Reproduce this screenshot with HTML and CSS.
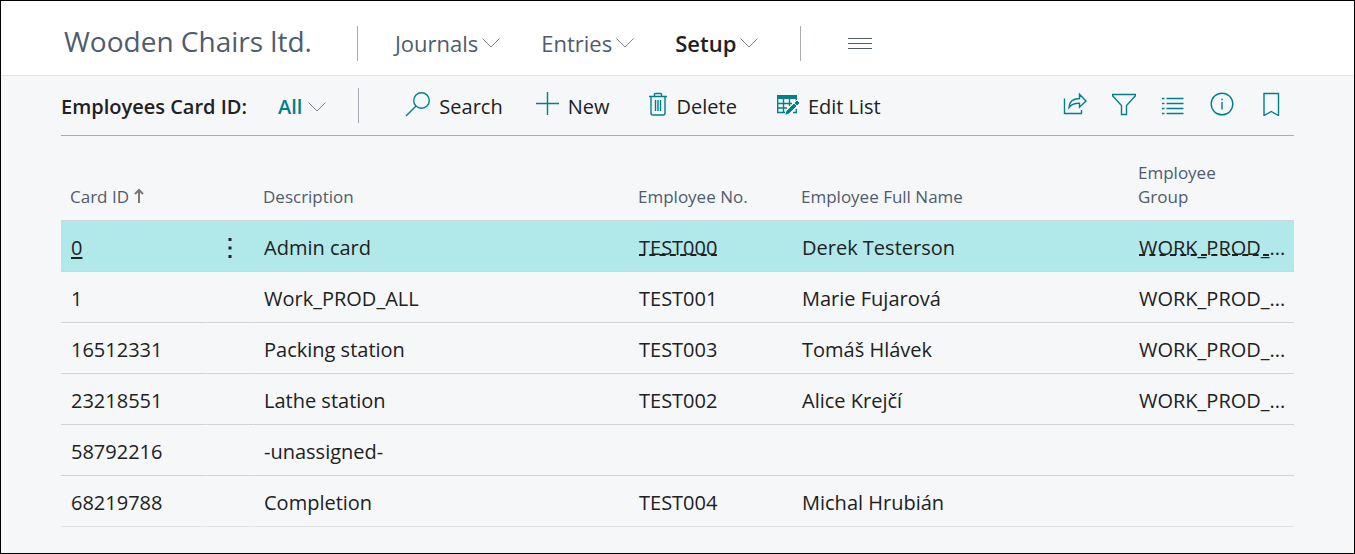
FILE: index.html
```
<!DOCTYPE html>
<html lang="en">

<head>
  <meta charset="UTF-8">
  <meta name="viewport" content="width=device-width, initial-scale=1.0">
  <title>Employees Card ID - Wooden Chairs ltd.</title>
  <link rel="stylesheet" href="styles.css">
</head>

<body>
  <header class="top-bar">
    <h1>Wooden Chairs ltd.</h1>
    <span class="divider"></span>
    <nav class="main-nav">
      <button type="button">Journals
        <svg class="chevron" viewBox="0 0 18 10"><path d="M0.5 0.5 L9 9 L17.5 0.5" /></svg>
      </button>
      <button type="button">Entries
        <svg class="chevron" viewBox="0 0 18 10"><path d="M0.5 0.5 L9 9 L17.5 0.5" /></svg>
      </button>
      <button type="button" class="active">Setup
        <svg class="chevron" viewBox="0 0 18 10"><path d="M0.5 0.5 L9 9 L17.5 0.5" /></svg>
      </button>
    </nav>
    <span class="divider"></span>
    <button type="button" class="menu-btn" aria-label="More">
      <svg width="24" height="13" viewBox="0 0 24 13"><path d="M0 1.5 H24 M0 6.5 H24 M0 11.5 H24" /></svg>
    </button>
  </header>

  <main>
    <div class="toolbar">
      <h2>Employees Card ID:</h2>
      <button type="button" class="view-btn">All
        <svg class="chevron" viewBox="0 0 18 10"><path d="M0.5 0.5 L9 9 L17.5 0.5" /></svg>
      </button>
      <span class="divider"></span>

      <div class="actions">
        <button type="button">
          <svg width="26" height="26" viewBox="0 0 26 26"><circle cx="16.5" cy="9.5" r="7.8" /><path d="M11 15 L1 25" /></svg>
          Search
        </button>
        <button type="button" class="new-btn">
          <svg width="24" height="26" viewBox="0 0 24 26"><path d="M11.5 1 V24 M0 12.5 H23" /></svg>
          New
        </button>
        <button type="button">
          <svg width="20" height="26" viewBox="0 0 20 26"><path d="M1 5.5 H19 M6.5 5.5 V3.5 Q6.5 2.5 7.5 2.5 H12.5 Q13.5 2.5 13.5 3.5 V5.5 M3 5.5 V22 Q3 24 5 24 H15 Q17 24 17 22 V5.5 M7.5 9 V20 M10 9 V20 M12.5 9 V20" /></svg>
          Delete
        </button>
        <button type="button">
          <svg width="24" height="26" viewBox="0 0 24 26">
            <path class="fill" d="M1 4 H21 V8 H1 Z" />
            <path d="M1.7 8 V21.5 H9 M20.3 8 V10 M7.5 8 V21.5 M13.5 8 V15 M1 12.5 H16 M1 17 H11 M17 21.5 H20.3 V18" />
            <path class="pencil" d="M21 9 L24 12 L13 23 L8.5 24.5 L10 20 Z" />
            <path class="cut" d="M17.500 11.500 L21.500 15.500" />
          </svg>
          Edit List
        </button>
      </div>

      <div class="page-tools">
        <button type="button" aria-label="Share">
          <svg width="24" height="24" viewBox="0 0 24 24"><path d="M1.5 6.500 V21.5 H18.5 V18 M6 15.5 C6 10 10 6.8 16.5 6.5 V2.2 L23 9 L16.5 15.2 V11.2 C11.5 11 8.5 12 6 15.500 Z" /></svg>
        </button>
        <button type="button" aria-label="Filter">
          <svg width="24" height="24" viewBox="0 0 24 24"><path d="M0.7 2.5 H23.3 V4 L14.5 13.5 V22.5 H9.5 V13.5 L0.7 4 Z" /></svg>
        </button>
        <button type="button" aria-label="Show as list">
          <svg width="24" height="24" viewBox="0 0 24 24"><path d="M1 6.5 H3.5 M5.5 6.5 H22.5 M1 11.5 H3.5 M5.5 11.5 H22.5 M1 16.5 H3.5 M5.5 16.5 H22.5 M1 21.5 H3.5 M5.5 21.5 H22.5" /></svg>
        </button>
        <button type="button" aria-label="Details">
          <svg width="24" height="24" viewBox="0 0 24 24"><circle cx="12" cy="12" r="10.8" /><path d="M12 10 V17.5 M12 6.5 V8.2" /></svg>
        </button>
        <button type="button" aria-label="Bookmark">
          <svg width="24" height="24" viewBox="0 0 24 24"><path d="M5 1.5 H19.500 V23.5 L12.2 19.5 L5 23.5 Z" /></svg>
        </button>
      </div>
    </div>

    <table>
      <colgroup>
        <col class="col-id">
        <col class="col-more">
        <col class="col-description">
        <col class="col-number">
        <col class="col-name">
        <col class="col-group">
      </colgroup>
      <thead>
        <tr>
          <th>Card ID <svg class="sort" width="10" height="16" viewBox="0 0 10 16"><path d="M5 15 V2 M1 6 L5 2 L9 6" /></svg></th>
          <th></th>
          <th>Description</th>
          <th>Employee No.</th>
          <th>Employee Full Name</th>
          <th>Employee Group</th>
        </tr>
      </thead>
      <tbody>
        <tr class="selected">
          <td><a href="#" class="card-link">0</a></td>
          <td>
            <button type="button" class="row-menu" aria-label="Show more options">
              <svg width="4" height="22" viewBox="0 0 4 22"><path d="M0.5 1 H3.5 V4 H0.5 Z M0.5 9.5 H3.5 V12.5 H0.5 Z M0.5 18 H3.5 V21 H0.5 Z" /></svg>
            </button>
          </td>
          <td>Admin card</td>
          <td><a href="#" class="lookup">TEST000</a></td>
          <td>Derek Testerson</td>
          <td><a href="#" class="lookup">WORK_PROD_</a>...</td>
        </tr>
        <tr>
          <td>1</td>
          <td></td>
          <td>Work_PROD_ALL</td>
          <td>TEST001</td>
          <td>Marie Fujarová</td>
          <td>WORK_PROD_...</td>
        </tr>
        <tr>
          <td>16512331</td>
          <td></td>
          <td>Packing station</td>
          <td>TEST003</td>
          <td>Tomáš Hlávek</td>
          <td>WORK_PROD_...</td>
        </tr>
        <tr>
          <td>23218551</td>
          <td></td>
          <td>Lathe station</td>
          <td>TEST002</td>
          <td>Alice Krejčí</td>
          <td>WORK_PROD_...</td>
        </tr>
        <tr>
          <td>58792216</td>
          <td></td>
          <td>-unassigned-</td>
          <td></td>
          <td></td>
          <td></td>
        </tr>
        <tr>
          <td>68219788</td>
          <td></td>
          <td>Completion</td>
          <td>TEST004</td>
          <td>Michal Hrubián</td>
          <td></td>
        </tr>
      </tbody>
    </table>
  </main>
</body>

</html>
```
FILE: styles.css
```
* {
  box-sizing: border-box;
}

body {
  margin: 0;
  min-height: 100vh;
  border: 1px solid #000;
  background-color: #f5f7f9;
  font-family: "Open Sans", "Noto Sans", sans-serif;
  font-size: 20px;
  color: #212121;
}

h1,
h2 {
  margin: 0;
  white-space: nowrap;
}

button {
  display: flex;
  align-items: center;
  padding: 0;
  border: none;
  background: none;
  font: inherit;
  color: inherit;
  white-space: nowrap;
  cursor: pointer;
}

svg {
  flex: none;
  fill: none;
  stroke: #008089;
  stroke-width: 1.4;
}

.divider {
  flex: none;
  width: 1px;
  height: 35px;
  background-color: #a6abb5;
}

.chevron {
  width: 18px;
  height: 10px;
  margin-left: 4px;
  stroke: #7d8590;
  stroke-width: 1;
}

/* Top bar */
.top-bar {
  display: flex;
  align-items: center;
  height: 75px;
  padding: 10px 60px 0;
  border-bottom: 1px solid #e3e6e9;
  background-color: #fff;
  color: #505c6d;
}

.top-bar h1 {
  margin: 0 45px 4px 3px;
  font-size: 28px;
  font-weight: 400;
}

.main-nav {
  display: flex;
  gap: 41px;
  margin: 0 42px 0 37px;
  font-size: 22px;
}

.main-nav .active {
  font-weight: 600;
  color: #212121;
}

.menu-btn {
  margin-left: 47px;
}

.menu-btn svg {
  stroke: #505c6d;
  stroke-width: 1;
}

/* Action bar */
main {
  padding: 0 60px;
}

.toolbar {
  display: flex;
  align-items: center;
  height: 60px;
  border-bottom: 1px solid #a6abb5;
}

.toolbar h2 {
  padding-top: 2px;
  font-size: 20px;
  font-weight: 600;
}

.view-btn {
  margin: 0 32px 0 31px;
  padding-top: 2px;
  font-weight: 600;
  color: #008089;
}

.view-btn .chevron {
  margin-left: 6px;
}

.actions {
  display: flex;
  gap: 39px;
  margin-left: 46px;
}

.actions button {
  gap: 8px;
  padding-top: 1px;
}

.actions svg,
.page-tools svg {
  margin-bottom: 4px;
}

.actions .new-btn {
  margin-left: -6px;
}

.actions .fill {
  fill: #008089;
  stroke: none;
}

.actions .pencil {
  fill: #008089;
  stroke: #f5f7f9;
  stroke-width: 1;
}

.actions .cut {
  stroke: #f5f7f9;
  stroke-width: 1;
}

.page-tools {
  display: flex;
  gap: 25px;
  margin-left: auto;
  margin-right: 11px;
}

/* Card list */
table {
  width: 100%;
  border-spacing: 0;
  table-layout: fixed;
}

.col-id {
  width: 146px;
}

.col-more {
  width: 47px;
}

.col-number {
  width: 163px;
}

.col-name {
  width: 337px;
}

.col-group {
  width: 165px;
}

th {
  height: 85px;
  padding: 0 0 11px 9px;
  border-bottom: 1px solid #d0d3d8;
  font-size: 17px;
  font-weight: 400;
  line-height: 24px;
  text-align: left;
  vertical-align: bottom;
  color: #505c6d;
}

th:last-child {
  padding-right: 60px;
}

td {
  height: 51px;
  padding: 3px 0 0 10px;
  border-bottom: 1px solid #d0d3d8;
  line-height: 28px;
  white-space: nowrap;
}

/* small break in the row lines around the menu column */
td:nth-child(-n+2) {
  border-right: 1px solid transparent;
}

tbody tr:last-child td {
  border-bottom-color: #e1e4e7;
}

.selected td {
  background-color: #b1e9eb;
}

td a {
  color: inherit;
  text-decoration-thickness: 2px;
  text-underline-offset: 2px;
  text-decoration-skip-ink: none;
}

.lookup {
  text-decoration-style: dashed;
  text-underline-offset: 0;
}

.sort {
  margin-left: 1px;
  vertical-align: -1px;
  stroke: #777;
  stroke-width: 2;
}

.row-menu {
  margin-left: 11px;
}

.row-menu svg {
  fill: #212121;
  stroke: none;
}
```
